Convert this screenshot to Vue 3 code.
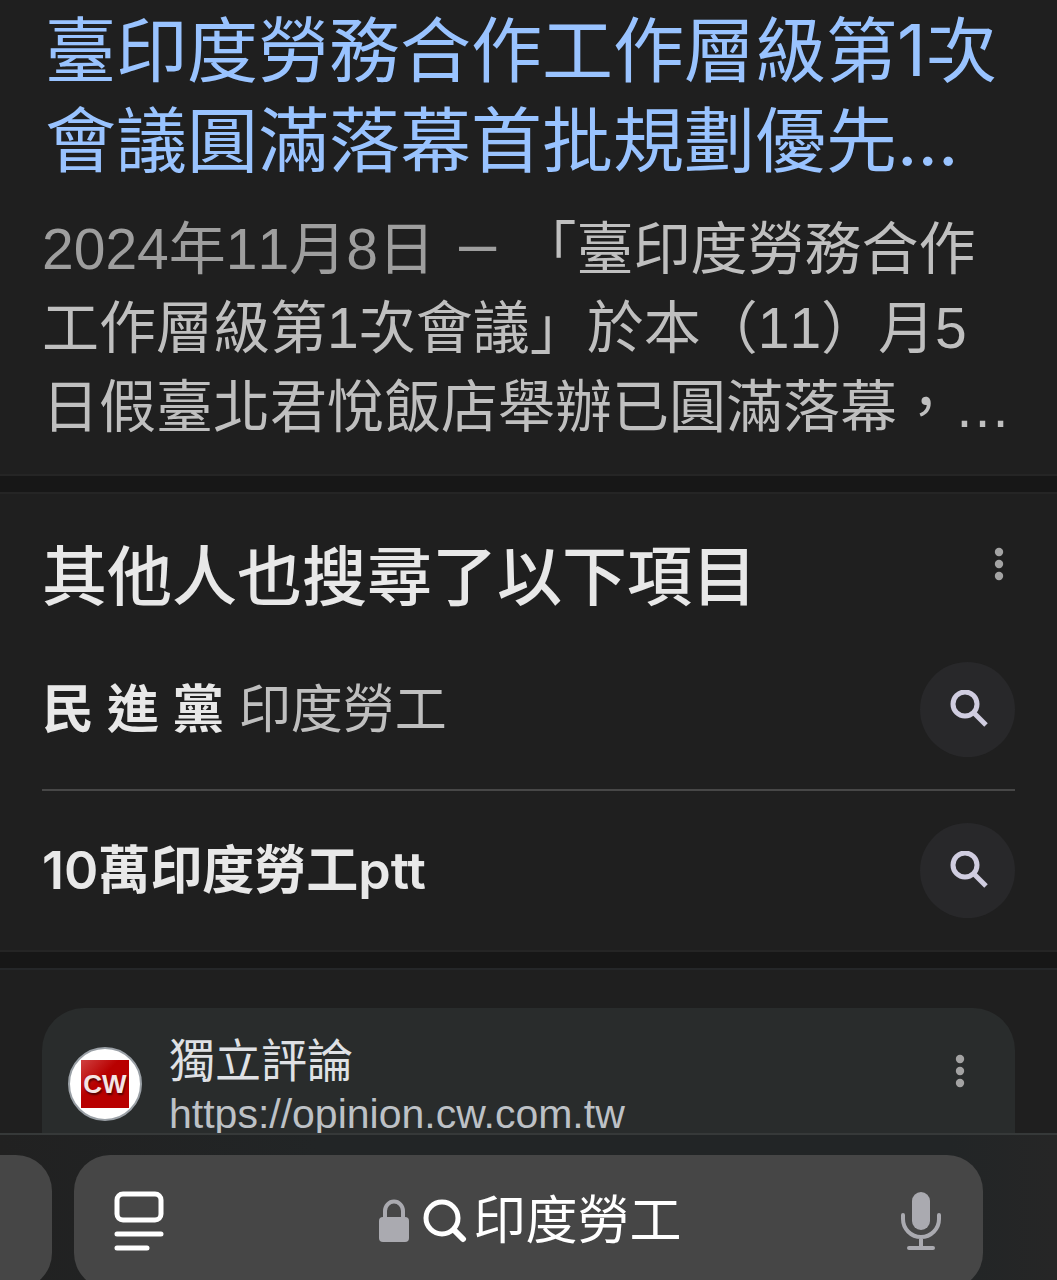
<template>
  <div class="screen">
    <main class="results">
      <article class="result">
        <h3 class="result-title">
          <a href="#">臺印度勞務合作工作層級第1次<br>會議圓滿落幕首批規劃優先...</a>
        </h3>
        <p class="snippet">
          <span class="date">2024年11月8日<span class="dash">—</span></span>「臺印度勞務合作<br>
          工作層級第1次會議」於本（11）月5<br>
          日假臺北君悅飯店舉辦已圓滿落幕，…
        </p>
      </article>

      <section class="related">
        <div class="related-head">
          <h2>其他人也搜尋了以下項目</h2>
          <button class="more" type="button" aria-label="更多選項">
            <svg viewBox="0 0 10 34"><circle cx="5" cy="5" r="4.2" /><circle cx="5" cy="17" r="4.2" /><circle cx="5" cy="29" r="4.2" /></svg>
          </button>
        </div>
        <ul>
          <li v-for="(item, index) in related" :key="index">
            <a class="related-link" href="#">
              <span><b>{{ item.bold }}</b>{{ item.rest }}</span>
              <span class="round">
                <svg viewBox="0 0 40 40">
                  <circle cx="17" cy="14" r="12" />
                  <path d="M26 23 L38 35" />
                </svg>
              </span>
            </a>
          </li>
        </ul>
      </section>

      <section class="next">
        <article class="card">
          <span class="favicon"><span class="cw">CW</span></span>
          <a class="site" href="#">
            <span class="site-name">獨立評論</span>
            <span class="site-url">https://opinion.cw.com.tw</span>
          </a>
          <button class="more" type="button" aria-label="更多選項">
            <svg viewBox="0 0 10 34"><circle cx="5" cy="5" r="4.2" /><circle cx="5" cy="17" r="4.2" /><circle cx="5" cy="29" r="4.2" /></svg>
          </button>
        </article>
      </section>
    </main>

    <footer class="toolbar">
      <div class="prev-tab"></div>
      <div class="address">
        <button class="page-menu" type="button" aria-label="頁面選單">
          <svg viewBox="0 0 50 60">
            <rect x="3" y="3" width="44" height="26" rx="6" />
            <path d="M3 43 H47 M3 57 H33" />
          </svg>
        </button>
        <button class="query" type="button">
          <svg class="lock" viewBox="0 0 30 44">
            <path d="M6 20 V12 a9 9.5 0 0 1 18 0 V20" />
            <rect x="0" y="18" width="30" height="25" rx="4" />
          </svg>
          <svg class="glass" viewBox="0 0 44 44">
            <circle cx="19" cy="19" r="16" />
            <path d="M31 31 L40 40" />
          </svg>
          <span>{{ query }}</span>
        </button>
        <button class="mic" type="button" aria-label="語音輸入">
          <svg viewBox="0 0 40 60">
            <rect x="11" y="1" width="18" height="38" rx="9" />
            <path d="M2 24 V28 a18 18 0 0 0 36 0 V24 M20 46 V56 M8 57 H32" />
          </svg>
        </button>
      </div>
    </footer>
  </div>
</template>

<script setup>
import { ref } from 'vue';

const query = ref('印度勞工');

const related = ref([
  { bold: '民 進 黨', rest: ' 印度勞工' },
  { bold: '10萬印度勞工ptt', rest: '' },
]);
</script>

<style>
body {
  margin: 0;
  background: #1f1f1f;
}
</style>

<style scoped>
.screen {
  display: flex;
  flex-direction: column;
  height: 100vh;
  overflow: hidden;
  background: #171717;
  color: #e8e8e8;
  font-family: "Liberation Sans", "Noto Sans CJK TC", sans-serif;
}

h2, h3, p, ul {
  margin: 0;
  padding: 0;
  font-weight: 400;
}

a {
  color: inherit;
  text-decoration: none;
}

button {
  padding: 0;
  border: 0;
  background: none;
  color: inherit;
  font: inherit;
}

svg {
  display: block;
}

.results {
  display: flex;
  flex: 1;
  flex-direction: column;
  gap: 16px;
  min-height: 0;
  overflow: hidden;
}

.result, .related, .next {
  flex: none;
  padding: 0 42px;
  background: #1f1f1f;
}

.result {
  padding-top: 5px;
  padding-bottom: 27px;
  border-bottom: 2px solid #252525;
  white-space: nowrap;
}

.result-title {
  padding-left: 3px;
  color: #99c3ff;
  font-family: Inter, "Noto Sans CJK TC", sans-serif;
  font-size: 71px;
  line-height: 90px;
}

.snippet {
  margin-top: 25px;
  color: #bfbfbf;
  font-size: 57px;
  font-kerning: none;
  line-height: 79px;
}

.date {
  color: #9e9e9e;
}

.dash {
  margin: 0 20px;
  font-family: Roboto, sans-serif;
}

.related {
  padding-bottom: 32px;
  border-top: 2px solid #252525;
  border-bottom: 2px solid #252525;
}

.related-head {
  display: flex;
  justify-content: space-between;
  padding: 36px 0 4px;
}

.related-head h2 {
  font-size: 65px;
  font-weight: 500;
  line-height: 96px;
}

.related-head .more {
  align-self: flex-start;
  margin: 17px 11px 0 0;
}

.more svg {
  width: 10px;
  height: 34px;
  fill: #a3a3a3;
}

ul {
  list-style: none;
}

li + li {
  border-top: 2px solid #474747;
}

.related-link {
  display: flex;
  align-items: center;
  justify-content: space-between;
  padding: 32px 0;
  color: #bfbfbf;
  font-family: Inter, "Noto Sans CJK TC", sans-serif;
  font-size: 52px;
  line-height: 95px;
}

li:last-child .related-link {
  padding-bottom: 0;
}

.related-link b {
  color: #e8e8e8;
  font-weight: 600;
}

.round {
  display: flex;
  align-items: center;
  justify-content: center;
  width: 95px;
  height: 95px;
  border-radius: 50%;
  background: #28282a;
}

.round svg {
  width: 40px;
  height: 40px;
  fill: none;
  stroke: #d0cde0;
  stroke-width: 5;
}

.next {
  padding-top: 38px;
  border-top: 2px solid #252729;
}

.card {
  display: flex;
  align-items: flex-start;
  padding: 24px 50px 40px 26px;
  border-radius: 42px;
  background: #292c2c;
}

.favicon {
  display: flex;
  align-items: center;
  justify-content: center;
  width: 70px;
  height: 70px;
  margin-top: 15px;
  border: 2px solid #9aa0a6;
  border-radius: 50%;
  background: #fff;
}

.cw {
  width: 48px;
  background: linear-gradient(135deg, #d04040, #b80000 40%);
  color: #f4e4e4;
  font-size: 26px;
  font-weight: 700;
  line-height: 48px;
  text-align: center;
  text-shadow: 1px 2px 2px #500;
}

.site {
  display: flex;
  flex: 1;
  flex-direction: column;
  margin-left: 27px;
}

.site-name {
  color: #dfe1e5;
  font-size: 46px;
  line-height: 58px;
}

.site-url {
  color: #bdc1c6;
  font-size: 41px;
  line-height: 48px;
}

.card .more {
  margin-top: 22px;
}

.toolbar {
  display: flex;
  flex: none;
  gap: 22px;
  box-sizing: border-box;
  height: 147px;
  padding: 20px 74px 0 0;
  border-top: 2px solid #363939;
  background: linear-gradient(90deg, #212121, #222526 30%, #222526 90%, #262626);
  overflow: hidden;
}

.prev-tab, .address {
  height: 134px;
  background: #464646;
}

.prev-tab {
  width: 52px;
  border-radius: 0 36px 36px 0;
}

.address {
  display: flex;
  flex: 1;
  align-items: center;
  justify-content: space-between;
  box-sizing: border-box;
  padding: 0 42px 2px 40px;
  border-radius: 36px;
}

.page-menu svg {
  width: 50px;
  height: 60px;
  fill: none;
  stroke: #fff;
  stroke-width: 5;
  stroke-linecap: round;
}

.query {
  display: flex;
  align-items: center;
  margin-right: 4px;
  color: #fff;
  font-size: 52px;
  line-height: 72px;
}

.lock {
  width: 30px;
  height: 44px;
  margin-right: 14px;
  fill: #aaaab0;
}

.lock path {
  fill: none;
  stroke: #aaaab0;
  stroke-width: 4;
}

.glass {
  width: 44px;
  height: 44px;
  margin-right: 6px;
  fill: none;
  stroke: #fff;
  stroke-width: 5;
  stroke-linecap: round;
}

.glass path {
  stroke-width: 6;
}

.mic svg {
  width: 40px;
  height: 60px;
  fill: #aaaab0;
}

.mic path {
  fill: none;
  stroke: #aaaab0;
  stroke-width: 4;
  stroke-linecap: round;
}
</style>
